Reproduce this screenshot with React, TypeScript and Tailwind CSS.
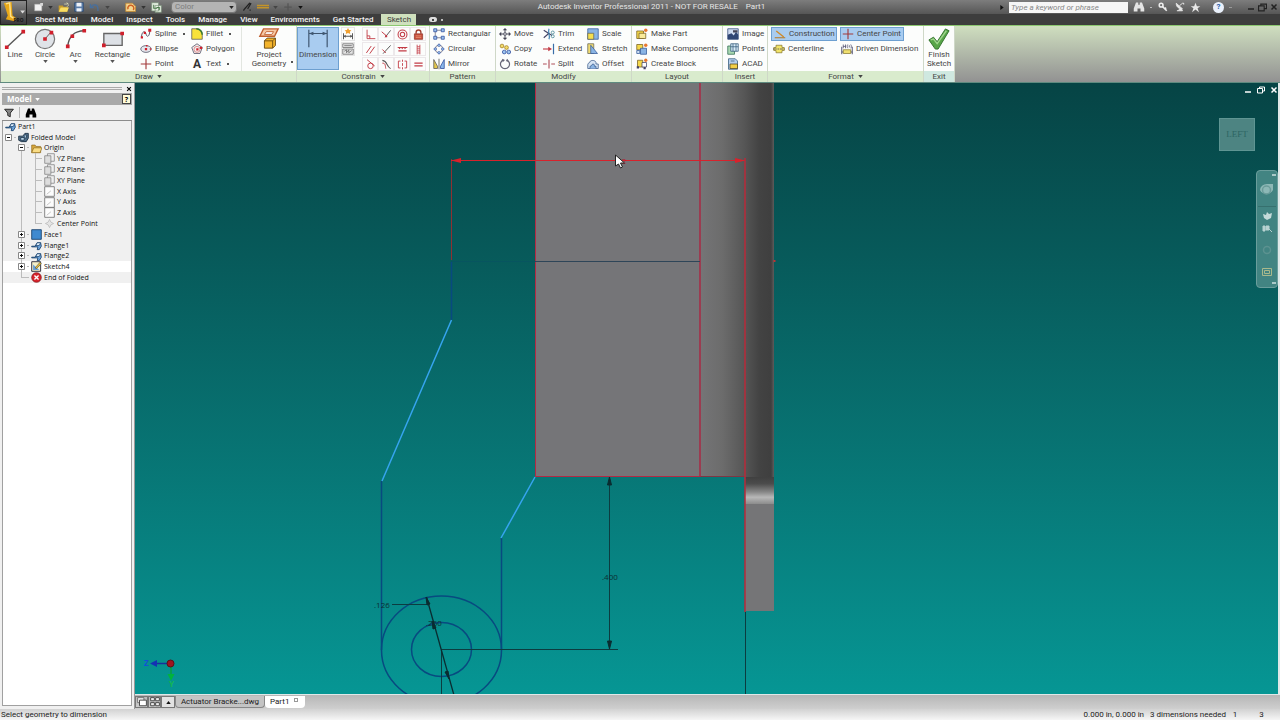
import type { ReactNode } from 'react';
import clsx from 'clsx';

// Drawings for the small ribbon and tree icons, on a 16x16 grid
const ICONS: Record<string, ReactNode> = {
  spline: (
    <>
      <path d="M2 13C2 4 7 3 8 8s5 4 5-5" fill="none" stroke="#556" strokeWidth="1.3" />
      <path d="M1 11h3v3H1zM5 5h3v3H5zM11 1h4v4h-4z" fill="#d0202c" />
    </>
  ),
  ellipse: (
    <>
      <ellipse cx="8" cy="8" rx="7" ry="4.5" fill="#e4e8ee" stroke="#667" strokeWidth="1.2" />
      <path d="M6.500 6.500h3v3h-3zM8 2.500h2v2H8zM13 7h2v2h-2z" fill="#d0202c" />
    </>
  ),
  point: <path d="M8 1v14M1 8h14" stroke="#a23a3a" strokeWidth="1.500" />,
  fillet: (
    <>
      <path d="M1 1h6c5 0 8 4 8 8v6H1z" fill="#f8e23a" stroke="#555" />
      <path d="M7 1c5 0 8 4 8 8" fill="none" stroke="#3a7a30" strokeWidth="2" />
    </>
  ),
  polygon: (
    <>
      <path d="M8 1l7 5-3 8H4L1 6z" fill="#f4eeee" stroke="#667" strokeWidth="1.2" />
      <path d="M7 7h3v3H7zM12 5h3v3h-3z" fill="#d0202c" />
      <circle cx="8" cy="8.500" r="4" fill="none" stroke="#c77" />
    </>
  ),
  autoDim: (
    <>
      <path d="M2 7v8M14 7v8M2 11h12" stroke="#555" fill="none" strokeWidth="1.300" />
      <path d="M2 11l3-2v4zM14 11l-3-2v4z" fill="#555" />
      <path d="M8 0l1.500 2.500 3 .5-2 2 .5 3-3-1.500L5 8l.5-3-2-2 3-.5z" fill="#f0a030" />
    </>
  ),
  showConstraints: (
    <>
      <path d="M1 1h14v5H1zM1 8h14v7H1z" fill="#e5e5e5" stroke="#666" />
      <path d="M3 3.500h10M3 11l3-2v4l3-4v4l4-3" stroke="#666" fill="none" />
    </>
  ),
  coincident: <path d="M3 1v13h12M3 10h4v4" fill="none" stroke="#c23b45" strokeWidth="1.300" />,
  collinear: (
    <>
      <path d="M14 2L6 12" stroke="#555" strokeWidth="1.400" />
      <path d="M1 4l7 6" stroke="#c23b45" strokeWidth="1.400" />
      <path d="M6 9h3v3H6z" fill="#c23b45" />
    </>
  ),
  concentric: (
    <g fill="none" stroke="#c23b45" strokeWidth="1.500">
      <circle cx="8" cy="8" r="6.500" />
      <circle cx="8" cy="8" r="3.200" />
    </g>
  ),
  lock: (
    <>
      <path d="M4.500 7V5a3.500 3.500 0 017 0v2" fill="none" stroke="#a04030" strokeWidth="2" />
      <path d="M2 7h12v8H2z" fill="#c8503c" stroke="#8c3024" />
      <path d="M4 10h8M4 12.500h8" stroke="#f0a080" />
    </>
  ),
  parallel: <path d="M2 13L9 3M7 14l7-10" stroke="#c23b45" strokeWidth="1.400" />,
  perpendicular: (
    <>
      <path d="M3 14L14 2" stroke="#555" strokeWidth="1.400" />
      <path d="M2 8l5 5" stroke="#c23b45" strokeWidth="1.400" />
    </>
  ),
  horizontal: (
    <path d="M1 5h14M2 10h12M3 7l2-2M7 7l2-2M11 7l2-2" stroke="#c23b45" strokeWidth="1.500" />
  ),
  vertical: (
    <path d="M6 1v14M10 1v14M6 4h4M6 7h4M6 10h4M6 13h4" stroke="#c23b45" strokeWidth="1.200" />
  ),
  tangent: (
    <>
      <circle cx="8" cy="10" r="4" fill="none" stroke="#c23b45" strokeWidth="1.400" />
      <path d="M3 1l11 9" stroke="#c23b45" strokeWidth="1.400" />
    </>
  ),
  smooth: (
    <>
      <path d="M2 2c8 1 5 8 12 12" fill="none" stroke="#555" strokeWidth="1.500" />
      <path d="M2 6c5 0 4 4 5 8" fill="none" stroke="#c23b45" strokeWidth="1.400" />
    </>
  ),
  symmetric: (
    <path d="M5 3H2v10h3M11 3h3v10h-3M8 1v3M8 6v4M8 12v3" fill="none" stroke="#c23b45" strokeWidth="1.300" />
  ),
  equal: <path d="M2 6h12M2 10h12" stroke="#c23b45" strokeWidth="1.500" />,
  rectPattern: (
    <>
      <path d="M3 3h10M3 3v10h10" stroke="#667" fill="none" />
      <path d="M1 1h4v4H1zM11 1h4v4h-4zM1 11h4v4H1zM11 11h4v4h-4z" fill="#9cc4f0" stroke="#2c4a9a" />
    </>
  ),
  circPattern: (
    <>
      <circle cx="8" cy="8" r="5" fill="none" stroke="#667" />
      <path d="M8 1l2 2-2 2-2-2zM3 6l2 2-2 2-2-2zM13 6l2 2-2 2-2-2zM8 11l2 2-2 2-2-2z" fill="#9cc4f0" stroke="#2c4a9a" />
    </>
  ),
  mirror: (
    <>
      <path d="M1 2l5 9v3H1z" fill="#e6c84c" stroke="#555" />
      <path d="M15 2l-5 9v3h5z" fill="#8ab8ea" stroke="#2c4a9a" />
      <path d="M8 1v14" stroke="#444" />
    </>
  ),
  move: (
    <>
      <path d="M8 2v12M2 8h12" stroke="#445" strokeWidth="1.300" />
      <path d="M8 0l3 3H5zM8 16l3-3H5zM0 8l3-3v6zM16 8l-3-3v6z" fill="#445" />
      <path d="M6.500 6.500h3v3h-3z" fill="#fff" stroke="#445" />
    </>
  ),
  copy: (
    <>
      <circle cx="4" cy="4" r="2.500" fill="#f3dc6a" stroke="#a07c20" />
      <circle cx="10" cy="6" r="2.500" fill="#f3dc6a" stroke="#a07c20" />
      <circle cx="7" cy="12" r="2.500" fill="#9cc4f0" stroke="#2c4a9a" />
      <circle cx="13" cy="12" r="2.500" fill="#9cc4f0" stroke="#2c4a9a" />
    </>
  ),
  rotate: (
    <>
      <path d="M6 2.500a6 6 0 104 0" fill="none" stroke="#667" strokeWidth="1.600" />
      <path d="M4 1l4 1.500-3 3zM12 1L9 4l3 1z" fill="#667" />
    </>
  ),
  trim: (
    <>
      <path d="M1 3l11 7M1 13l7-6" stroke="#446" strokeWidth="1.500" />
      <path d="M8 1c-2 6 2 8 0 14" fill="none" stroke="#3b7fb0" strokeWidth="1.500" />
      <circle cx="13" cy="6" r="2" fill="none" stroke="#3b7f90" />
      <circle cx="13" cy="11" r="2" fill="none" stroke="#3b7f90" />
    </>
  ),
  extend: (
    <>
      <path d="M0 8h9" stroke="#c23b45" strokeWidth="1.500" />
      <path d="M7 5l5 3-5 3z" fill="#c23b45" />
      <path d="M14 1v14" stroke="#3a6ea8" strokeWidth="1.600" />
    </>
  ),
  split: <path d="M0 8h5M11 8h5M8 2v12" stroke="#b0505a" strokeWidth="1.500" />,
  scale: (
    <>
      <path d="M1 1h14v14H1z" fill="#8ab4e4" stroke="#335a9a" />
      <path d="M1 7h8v8H1z" fill="#f5df50" stroke="#665" />
    </>
  ),
  stretch: (
    <>
      <path d="M1 1h8v13H1z" fill="#f2dc70" stroke="#665" />
      <path d="M5 3l9 11H5z" fill="#8ab4e4" stroke="#335a9a" />
    </>
  ),
  offset: (
    <>
      <path d="M1 14V9c0-3 3-2 3-4s7-3 8 1v2h3v6z" fill="#d6e4f4" stroke="#3a5a8a" />
      <path d="M4 14v-3c3 0 2-3 4-3s2 2 2 3h2v3" fill="#8ab4e4" stroke="#3a5a8a" />
    </>
  ),
  makePart: (
    <>
      <path d="M1 4h9v10H1z" fill="#f5d94a" stroke="#775f20" />
      <path d="M4 7h9v7H4z" fill="#f9ea9a" stroke="#775f20" />
      <circle cx="13" cy="3" r="2.300" fill="#e87830" />
    </>
  ),
  makeComponents: (
    <>
      <path d="M1 2h8v7H1z" fill="#f5d94a" stroke="#775f20" />
      <path d="M6 7h8v8H6z" fill="#8ab4e4" stroke="#335a9a" />
      <path d="M1 10h4v4H1z" fill="#cfe0f5" stroke="#335a9a" />
      <circle cx="13" cy="3" r="2.300" fill="#e87830" />
    </>
  ),
  createBlock: (
    <>
      <path d="M2 3h7v9H2z" fill="#f5d94a" stroke="#775f20" />
      <path d="M8 6h6v6H8z" fill="#fff" stroke="#446" />
      <path d="M1 11h3v3H1zM10 12h3v3h-3z" fill="#446" />
      <circle cx="13" cy="3" r="2.200" fill="#e87830" />
    </>
  ),
  image: (
    <>
      <path d="M1 1h14v14H1z" fill="#cfdcf0" stroke="#334a7a" />
      <path d="M1 15V9l5-2 3 3 3-5 3 4v6z" fill="#2f4674" />
      <path d="M8 3h6v3H8z" fill="#445" />
    </>
  ),
  points: (
    <>
      <path d="M1 4h9v11H1z" fill="#a8d8b0" stroke="#2f6a50" />
      <path d="M5 1h10v10H5z" fill="#d8ecf8" stroke="#335a7a" />
      <path d="M5 5h10M8 1v10M12 1v10" stroke="#335a7a" />
    </>
  ),
  acad: (
    <>
      <path d="M2 1h9l3 3v11H2z" fill="#b4cfee" stroke="#335a7a" />
      <path d="M4 8h10v6H4z" fill="#f1cf48" stroke="#554a20" />
      <path d="M5 4h5" stroke="#335a7a" />
    </>
  ),
  construction: (
    <>
      <path d="M3 4l10 8" stroke="#d08a28" strokeWidth="1.800" />
      <path d="M1 13h14" stroke="#b8761c" strokeWidth="1.300" />
    </>
  ),
  centerline: (
    <>
      <path d="M4 3h8v3h3v4h-3v3H4v-3H1V6h3z" fill="#f2e468" stroke="#887a30" />
      <path d="M0 8h16" stroke="#445" strokeDasharray="5 1 2 1" />
    </>
  ),
  driven: (
    <>
      <path d="M1 5v10M15 5v10M1 12h14" stroke="#446" strokeWidth="1.200" />
      <path d="M3 9h10v5H3z" fill="#f0e070" stroke="#887a30" />
      <path d="M3 2v5M6 2v5M3 4.500h3M9 2c-1 1-1 4 0 5M13 2c1 1 1 4 0 5M11 3v3" stroke="#446" fill="none" />
    </>
  ),
  part: (
    <>
      <path d="M1 9h5l3-5h5l1 5-3 5H9l1-4H1z" fill="#6fa6dc" stroke="#123a66" strokeWidth="1.200" />
      <path d="M9 4h5l-2 4H7z" fill="#dcecfb" stroke="#123a66" />
    </>
  ),
  folded: (
    <>
      <path d="M1 6h6l3-4h5v7l-3 5H5l-4-2z" fill="#52718c" stroke="#10263a" strokeWidth="1.200" />
      <path d="M4 8h5v4H4zM10 4l3 1-2 5" fill="#bcd6ea" stroke="#10263a" />
    </>
  ),
  folder: (
    <>
      <path d="M1 3h5l1 2h7v9H1z" fill="#d9a83c" stroke="#8c6a20" />
      <path d="M4 7h12l-3 7H1z" fill="#f9dc84" stroke="#8c6a20" />
    </>
  ),
  plane: (
    <>
      <path d="M5 1h10v11H5z" fill="#eee" stroke="#777" />
      <path d="M1 4h9v11H1z" fill="#ddd" stroke="#777" />
    </>
  ),
  axis: (
    <>
      <path d="M1 1h14v14H1z" fill="#fcfcfc" stroke="#555" />
      <path d="M4 12l6-5" stroke="#aaa" />
    </>
  ),
  center: <path d="M8 2l2 4 4 2-4 2-2 4-2-4-4-2 4-2z" fill="#e4e4e4" stroke="#b4b4b4" />,
  face: <path d="M1 1h14v14H1z" fill="#3f8ad0" stroke="#123a66" strokeWidth="1.200" />,
  sketch: (
    <>
      <path d="M1 1h13v14H1z" fill="#f4efc8" stroke="#223" strokeWidth="1.300" />
      <path d="M3 13V5l9 8z" fill="#68a0d8" />
      <path d="M6 10l7-8 2 2-7 7z" fill="#f0c030" stroke="#554" />
    </>
  ),
  end: (
    <>
      <circle cx="8" cy="8" r="7" fill="#d8242c" stroke="#7c1418" />
      <path d="M5 5l6 6M11 5l-6 6" stroke="#fff" strokeWidth="2" />
    </>
  ),
  filter: <path d="M1 2h14l-5 6v6l-4-2V8z" fill="#888" stroke="#222" strokeWidth="1.500" />,
  binoculars: (
    <path d="M4 2h3v3h2V2h3l3 8v4h-5v-4H6v4H1v-4z" fill="currentColor" />
  ),
  newFile: (
    <>
      <path d="M1 2h13v12H1z" fill="#f2f2f2" stroke="#999" />
      <path d="M11 0h5v5h-5z" fill="#d8d8d8" />
    </>
  ),
  open: (
    <>
      <path d="M1 5h6l1 2h6v7H1z" fill="#c79c2a" />
      <path d="M4 8h12l-3 6H1z" fill="#f8dc62" />
      <path d="M9 3h5l-1-2 3 3-3 3" fill="none" stroke="#e8e8c0" />
    </>
  ),
  save: (
    <>
      <path d="M1 1h14v14H1z" fill="#5a7ca8" stroke="#24406a" />
      <path d="M4 1h8v6H4zM4 10h8v5H4z" fill="#eef2f8" />
    </>
  ),
  undo: <path d="M2 3v5h5M3 7c4-5 10-3 10 3v3" fill="none" stroke="#4a6f9a" strokeWidth="2" />,
  update: (
    <>
      <path d="M1 3h9l4 4v7H1z" fill="#f3d590" stroke="#c48a30" />
      <path d="M4 11a4 4 0 117 1" fill="none" stroke="#d06020" strokeWidth="2" />
    </>
  ),
  returnIcon: (
    <>
      <path d="M1 1h10v12H1zM6 5h9v10H6z" fill="#e4eee0" stroke="#7a927a" />
      <path d="M4 4v5h5M8 8h4v4" fill="none" stroke="#4a7a4a" strokeWidth="1.500" />
    </>
  ),
  brush: <path d="M3 14c-1-3 2-3 3-5L12 2l2 1-5 8M12 13h2" fill="none" stroke="#222" strokeWidth="2" />,
  lineStyle: <path d="M0 6h16M0 9h16" stroke="#c49428" strokeWidth="2" />,
  plus: <path d="M8 2v12M2 8h12" stroke="#555" strokeWidth="2" />,
  key: (
    <>
      <circle cx="5" cy="5" r="3" fill="none" stroke="#eee" strokeWidth="2.500" />
      <path d="M7 7l7 7M11 11l2-2" stroke="#eee" strokeWidth="2.500" />
    </>
  ),
  satellite: (
    <path d="M2 2c0 6 4 9 10 9zM7 6l5-4M3 14h9l-3-4M12 2h2v2" fill="#e8e8e8" stroke="#e8e8e8" strokeWidth="1.500" />
  ),
  star: <path d="M8 1l2 5h5l-4 3 2 6-5-4-5 4 2-6-4-3h5z" fill="#e8e8e8" />,
  windows: <path d="M1 5h10v9H1zM5 5V2h10v8h-4" fill="none" stroke="currentColor" strokeWidth="2" />,
  close: <path d="M3 3l10 10M13 3L3 13" stroke="currentColor" strokeWidth="3" />,
  minimize: <path d="M2 12h12" stroke="currentColor" strokeWidth="3" />,
  cascade: (
    <>
      <path d="M1 1h10v8H1z" fill="#eee" stroke="#444" />
      <path d="M4 5h11v9H4z" fill="#fff" stroke="#444" strokeWidth="1.500" />
    </>
  ),
  tile: <path d="M1 1h6v5H1zM9 1h6v5H9zM1 9h6v5H1zM9 9h6v5H9z" fill="#eee" stroke="#444" strokeWidth="1.500" />,
};

function Icon({ name, className = 'size-3' }: { name: string; className?: string }) {
  return (
    <svg viewBox="0 0 16 16" className={clsx('shrink-0', className)} aria-hidden="true">
      {ICONS[name]}
    </svg>
  );
}

function Caret({ className = 'text-[#444]' }: { className?: string }) {
  return (
    <svg viewBox="0 0 6 4" className={clsx('h-[3px] w-[5px] shrink-0', className)} aria-hidden="true">
      <path d="M0 0h6L3 4z" fill="currentColor" />
    </svg>
  );
}

interface PanelProps {
  title: string;
  width: string;
  caret?: boolean;
  exit?: boolean;
  children: ReactNode;
}

function Panel({ title, width, caret, exit, children }: PanelProps) {
  return (
    <section className={clsx('flex shrink-0 flex-col border-r border-[#cfd8c8]', width)}>
      <div className="flex flex-1 bg-[#fcfdfc] pt-px">{children}</div>
      <h2
        className={clsx(
          'flex h-[11px] items-center justify-center gap-1 text-[8px] leading-none',
          exit ? 'bg-[#cfe8e0]' : 'bg-[#d9ebcd]'
        )}
      >
        {title}
        {caret && <Caret />}
      </h2>
    </section>
  );
}

interface Item {
  icon: string;
  label: string;
  caret?: boolean;
}

function ToolColumn({ items, width }: { items: Item[]; width: string }) {
  return (
    <div className={clsx('flex shrink-0 flex-col gap-px', width)}>
      {items.map(item => (
        <button key={item.label} className="flex h-[14px] items-center gap-[3px] whitespace-nowrap">
          {item.icon === 'text' ? (
            <span className="w-3 text-center text-[12px] leading-none font-bold text-[#333]">A</span>
          ) : (
            <Icon name={item.icon} />
          )}
          <span>{item.label}</span>
          {item.caret && <span className="ml-[3px] size-[2px] bg-[#555]" />}
        </button>
      ))}
    </div>
  );
}

interface BigToolProps {
  label: ReactNode;
  width: string;
  caret?: boolean;
  active?: boolean;
  children: ReactNode;
}

function BigTool({ label, width, caret, active, children }: BigToolProps) {
  return (
    <button
      className={clsx(
        'flex shrink-0 flex-col items-center border',
        width,
        active ? 'border-[#6d9fd0] bg-[#a9ccf0]' : 'border-transparent'
      )}
    >
      <svg viewBox="0 0 24 24" className="size-[22px] shrink-0" aria-hidden="true">
        {children}
      </svg>
      <span className="text-center leading-[9px]">{label}</span>
      {caret && <Caret className="mt-px text-[#555]" />}
    </button>
  );
}

const CONSTRAINTS = [
  'coincident', 'collinear', 'concentric', 'lock',
  'parallel', 'perpendicular', 'horizontal', 'vertical',
  'tangent', 'smooth', 'symmetric', 'equal',
];

function Ribbon() {
  return (
    <div className="flex h-[57px] shrink-0 border-t border-[#8cc870] bg-linear-to-b from-[#cfdfbf] to-[#929292] pl-px text-[8px] leading-none text-[#454545]">
      <Panel title="Draw" width="w-[296px]" caret>
        <BigTool label="Line" width="w-[28px]">
          <path d="M3 21L21 4" stroke="#555" strokeWidth="1.500" />
          <path d="M1 19h4v4H1zM19 2h4v4h-4z" fill="#d0202c" />
        </BigTool>
        <BigTool label="Circle" width="w-[32px]" caret>
          <circle cx="12" cy="12" r="10.500" fill="#dfe3e8" stroke="#777" strokeWidth="1.300" />
          <path d="M12 12l6-7" stroke="#555" />
          <path d="M10 10h4v4h-4zM17 3h4v4h-4z" fill="#d0202c" />
        </BigTool>
        <BigTool label="Arc" width="w-[29px]" caret>
          <path d="M3 20C4 10 10 3 21 3" fill="none" stroke="#555" strokeWidth="1.500" />
          <path d="M1 18h4v4H1zM6 7h4v4H6zM19 1h4v4h-4z" fill="#d0202c" />
        </BigTool>
        <BigTool label="Rectangle" width="w-[45px]" caret>
          <path d="M2 6h20v13H2z" fill="#dde1e6" stroke="#666" strokeWidth="1.500" />
          <path d="M0 17h4v4H0zM20 4h4v4h-4z" fill="#d0202c" />
        </BigTool>
        <div className="flex flex-1 pl-[5px]">
          <ToolColumn
            width="w-[51px]"
            items={[
              { icon: 'spline', label: 'Spline', caret: true },
              { icon: 'ellipse', label: 'Ellipse' },
              { icon: 'point', label: 'Point' },
            ]}
          />
          <ToolColumn
            width="w-[49px]"
            items={[
              { icon: 'fillet', label: 'Fillet', caret: true },
              { icon: 'polygon', label: 'Polygon' },
              { icon: 'text', label: 'Text', caret: true },
            ]}
          />
        </div>
        <div className="flex w-[55px] items-end border-l border-[#e2e6e0] pl-[3px]">
          <BigTool label={<>Project<br />Geometry</>} width="h-full w-[48px]">
            <path d="M6 1h16l-4 8H2z" fill="#f6c9a4" stroke="#c06030" strokeWidth="1.500" />
            <path d="M9 4h8l-2 3H7z" fill="#fff" stroke="#c06030" />
            <path d="M7 14l3-3h9v8l-3 3H7z" fill="#f4b42c" stroke="#6a4a10" />
            <path d="M7 14h9v8M16 14l3-3" fill="none" stroke="#6a4a10" />
          </BigTool>
          <span className="mb-2 -ml-[2px] size-[2px] bg-[#555]" />
        </div>
      </Panel>

      <Panel title="Constrain" width="w-[133px]" caret>
        <BigTool label="Dimension" width="mb-px w-[42px]" active>
          <path d="M2 2v19M22 2v19M2 6h20" stroke="#3f5670" strokeWidth="1.300" fill="none" />
          <path d="M2 6l5-2v4zM22 6l-5-2v4z" fill="#3f5670" />
        </BigTool>
        <div className="ml-[2px] flex flex-col gap-px">
          {['autoDim', 'showConstraints'].map(name => (
            <button key={name} aria-label={name} className="flex h-[14px] w-[14px] items-center justify-center border border-[#e4e4e4]">
              <Icon name={name} />
            </button>
          ))}
        </div>
        <div className="ml-[7px] grid grid-cols-4 content-start gap-y-px">
          {CONSTRAINTS.map(name => (
            <button key={name} aria-label={name} className="flex h-[14px] w-4 items-center justify-center border border-[#ece8ea]">
              <Icon name={name} className="size-[11px]" />
            </button>
          ))}
        </div>
      </Panel>

      <Panel title="Pattern" width="w-[66px]">
        <ToolColumn
          width="ml-[3px] w-[60px]"
          items={[
            { icon: 'rectPattern', label: 'Rectangular' },
            { icon: 'circPattern', label: 'Circular' },
            { icon: 'mirror', label: 'Mirror' },
          ]}
        />
      </Panel>

      <Panel title="Modify" width="w-[136px]">
        <ToolColumn
          width="ml-[3px] w-[44px]"
          items={[
            { icon: 'move', label: 'Move' },
            { icon: 'copy', label: 'Copy' },
            { icon: 'rotate', label: 'Rotate' },
          ]}
        />
        <ToolColumn
          width="w-[44px]"
          items={[
            { icon: 'trim', label: 'Trim' },
            { icon: 'extend', label: 'Extend' },
            { icon: 'split', label: 'Split' },
          ]}
        />
        <ToolColumn
          width="w-[42px]"
          items={[
            { icon: 'scale', label: 'Scale' },
            { icon: 'stretch', label: 'Stretch' },
            { icon: 'offset', label: 'Offset' },
          ]}
        />
      </Panel>

      <Panel title="Layout" width="w-[91px]">
        <ToolColumn
          width="ml-[4px] w-[84px]"
          items={[
            { icon: 'makePart', label: 'Make Part' },
            { icon: 'makeComponents', label: 'Make Components' },
            { icon: 'createBlock', label: 'Create Block' },
          ]}
        />
      </Panel>

      <Panel title="Insert" width="w-[45px]">
        <ToolColumn
          width="ml-[4px] w-[40px]"
          items={[
            { icon: 'image', label: 'Image' },
            { icon: 'points', label: 'Points' },
            { icon: 'acad', label: 'ACAD' },
          ]}
        />
      </Panel>

      <Panel title="Format" width="w-[156px]" caret>
        <div className="grid grid-cols-[69px_83px] content-start gap-y-px pl-[3px] whitespace-nowrap">
          <button className="flex h-[14px] w-[66px] items-center gap-[3px] border border-[#6d9fd0] bg-[#a9ccf0] pl-[2px]">
            <Icon name="construction" />
            Construction
          </button>
          <button className="flex h-[14px] w-[64px] items-center gap-[3px] border border-[#6d9fd0] bg-[#a9ccf0] pl-px">
            <Icon name="point" />
            Center Point
          </button>
          <button className="flex h-[14px] items-center gap-[3px] pl-[2px]">
            <Icon name="centerline" />
            Centerline
          </button>
          <button className="flex h-[14px] items-center gap-[3px] pl-px">
            <Icon name="driven" />
            Driven Dimension
          </button>
        </div>
      </Panel>

      <Panel title="Exit" width="w-[31px]" exit>
        <BigTool label={<>Finish<br />Sketch</>} width="w-[30px]">
          <path d="M1 13l5-3 4 5L19 1l4 2-12 20H8z" fill="#57a548" stroke="#2f6f2a" />
          <path d="M3 13l3-1 4 5L20 3" fill="none" stroke="#9fd58c" strokeWidth="1.500" />
        </BigTool>
      </Panel>
    </div>
  );
}

const TABS = ['Sheet Metal', 'Model', 'Inspect', 'Tools', 'Manage', 'View', 'Environments', 'Get Started'];

function TitleBar() {
  return (
    <header className="flex h-[25px] shrink-0">
      <button aria-label="Application menu" className="flex w-[27px] shrink-0 items-end border border-[#222] bg-linear-to-b from-[#8a8a8a] to-[#3a3a3a]">
        <svg viewBox="0 0 26 24" className="h-[23px] w-[25px]" aria-hidden="true">
          <path d="M3 2l8-1 1 14 4 3-2 3-9-2 2-4z" fill="#e8a818" />
          <path d="M5 3l4-1 1 14 3 2" fill="none" stroke="#ffe28a" strokeWidth="1.500" />
          <path d="M20 10h5l-2.500 3z" fill="#ddd" />
          <text x="13" y="22" fontSize="5" fontWeight="700" fill="#151515" fontFamily="Open Sans">PRO</text>
        </svg>
      </button>
      <div className="flex min-w-0 flex-1 flex-col">
        <div className="grid h-[14px] grid-cols-[1fr_auto_1fr] items-center bg-linear-to-b from-[#7d7d7d] to-[#565656]">
          <div className="flex items-center gap-[5px] pl-[6px]">
            <Icon name="newFile" className="h-[9px] w-[11px]" />
            <Caret className="-ml-px text-[#333]" />
            <Icon name="open" className="size-[11px]" />
            <Icon name="save" className="size-[10px]" />
            <Icon name="undo" className="size-[11px]" />
            <Caret className="text-[#444]" />
            <Icon name="update" className="ml-[10px] size-3" />
            <Caret className="-ml-px text-[#333]" />
            <Icon name="returnIcon" className="size-[11px]" />
            <div className="ml-[4px] flex h-3 w-[66px] items-center rounded-sm border border-[#777] bg-[#b4b4b4] pr-[2px]">
              <select aria-label="Color" className="h-[10px] min-w-0 flex-1 appearance-none pl-[3px] text-[8px] leading-[10px] text-[#7c7c7c]">
                <option>Color</option>
              </select>
              <Caret className="text-[#222]" />
            </div>
            <Icon name="brush" className="size-[10px]" />
            <Icon name="lineStyle" className="size-[12px]" />
            <Caret className="-ml-px text-[#444]" />
            <Icon name="plus" className="size-[10px]" />
            <Caret className="text-[#111]" />
          </div>
          <h1 className="-ml-1 text-[8px] leading-none whitespace-pre text-[#e6e6e6]">
            Autodesk Inventor Professional 2011 - NOT FOR RESALE{'    '}Part1
          </h1>
          <div className="flex items-center justify-end gap-[5px] pr-[2px] text-[#e4e4e4]">
            <svg viewBox="0 0 4 6" className="h-[5px] w-[4px]" aria-hidden="true">
              <path d="M0 0l4 3-4 3z" fill="#111" />
            </svg>
            <input
              aria-label="Search"
              placeholder="Type a keyword or phrase"
              className="h-[11px] w-[119px] bg-[#f6f6f6] px-[2px] text-[8px] leading-none italic placeholder:text-[#888]"
            />
            <Icon name="binoculars" />
            <span className="h-px w-[2px] bg-[#bbb]" />
            <Icon name="key" className="ml-px size-[10px]" />
            <Icon name="satellite" className="ml-[2px] size-[10px]" />
            <Icon name="star" className="size-[11px]" />
            <span className="ml-[7px] flex size-[11px] items-center justify-center rounded-full bg-[#e9f0fb] text-[8px] leading-none font-bold text-[#2a5aa8]">
              ?
            </span>
            <span className="mr-[10px] h-px w-[3px] bg-[#999]" />
            <div className="flex items-center gap-[3px] text-[#222]">
              <button aria-label="Minimize"><Icon name="minimize" className="block size-[8px]" /></button>
              <button aria-label="Restore"><Icon name="windows" className="block size-[9px]" /></button>
              <button aria-label="Close"><Icon name="close" className="block size-[8px]" /></button>
            </div>
          </div>
        </div>
        <nav className="flex h-[11px] items-center gap-[13px] bg-[#3d3d3d] pl-2 text-[8px] leading-none font-medium text-[#f2f2f2]">
          {TABS.map(tab => (
            <button key={tab}>{tab}</button>
          ))}
          <button className="-ml-[5px] h-full w-[35px] bg-[#cfe0bd] text-center font-normal text-[#3a3a3a]">Sketch</button>
          <span className="flex h-[5px] w-2 items-center justify-center rounded-sm bg-[#ddd]">
            <span className="size-[2px] bg-[#444]" />
          </span>
          <span className="-ml-[9px] size-[2px] bg-[#bbb]" />
        </nav>
      </div>
    </header>
  );
}

interface TreeNode {
  icon: string;
  label: string;
  level: number;
  toggle?: '+' | '-';
  active?: boolean;
}

const TREE: TreeNode[] = [
  { icon: 'part', label: 'Part1', level: 0 },
  { icon: 'folded', label: 'Folded Model', level: 1, toggle: '-' },
  { icon: 'folder', label: 'Origin', level: 2, toggle: '-' },
  { icon: 'plane', label: 'YZ Plane', level: 3 },
  { icon: 'plane', label: 'XZ Plane', level: 3 },
  { icon: 'plane', label: 'XY Plane', level: 3 },
  { icon: 'axis', label: 'X Axis', level: 3 },
  { icon: 'axis', label: 'Y Axis', level: 3 },
  { icon: 'axis', label: 'Z Axis', level: 3 },
  { icon: 'center', label: 'Center Point', level: 3 },
  { icon: 'face', label: 'Face1', level: 2, toggle: '+' },
  { icon: 'part', label: 'Flange1', level: 2, toggle: '+' },
  { icon: 'part', label: 'Flange2', level: 2, toggle: '+' },
  { icon: 'sketch', label: 'Sketch4', level: 2, toggle: '+', active: true },
  { icon: 'end', label: 'End of Folded', level: 2 },
];

const INDENT = ['pl-[2px]', 'pl-[2px]', 'pl-[15px]', 'pl-[29px]'];

function ModelBrowser() {
  return (
    <aside className="flex w-[135px] shrink-0 flex-col border-r border-[#9a9a9a] bg-[#f0f0f0] px-[2px] pb-[3px]">
      <div className="flex h-[10px] items-center gap-1 pt-px">
        <span className="h-[3px] flex-1 border-y border-[#aaa]" />
        <button aria-label="Close browser" className="text-black"><Icon name="close" className="size-[6px]" /></button>
      </div>
      <div className="flex h-3 items-center gap-[3px] bg-[#a9a9a9] pl-[5px] font-['Open_Sans',sans-serif] text-[8px] leading-none font-bold text-white">
        Model
        <Caret className="text-white" />
        <button aria-label="Help" className="mr-px ml-auto flex h-[10px] w-[9px] items-center justify-center border border-[#444] bg-[#fffbd8] text-[7px] leading-none text-black">
          ?
        </button>
      </div>
      <div className="flex h-4 items-center gap-[5px] border-b border-[#8c8c8c] pl-[2px] text-black">
        <button aria-label="Filter"><Icon name="filter" className="block size-[10px]" /></button>
        <span className="h-[11px] w-px bg-[#b5b5b5]" />
        <button aria-label="Find"><Icon name="binoculars" className="block size-[12px]" /></button>
      </div>
      <div className="flex-1 border-x border-b border-[#a0a0a0] bg-white">
        <ul className="relative grid h-[162px] auto-rows-fr bg-[#f0f0f0] font-['Open_Sans',sans-serif] text-[7px] leading-none text-[#111]">
          <li className="absolute top-[30px] left-[18px] h-[127px] w-px bg-[#bcbcbc]" aria-hidden="true" />
          <li className="absolute top-[32px] left-[32px] h-[71px] w-px bg-[#bcbcbc]" aria-hidden="true" />
          {TREE.map(node => (
            <li
              key={node.label}
              className={clsx('flex min-h-0 items-center gap-[2px]', INDENT[node.level], node.active && 'bg-white')}
            >
              {node.toggle && (
                <svg viewBox="0 0 7 7" className="relative size-[7px] shrink-0" aria-hidden="true">
                  <path d="M.5.5h6v6h-6z" fill="#fff" stroke="#888" />
                  <path d={node.toggle === '+' ? 'M2 3.500h3M3.500 2v3' : 'M2 3.500h3'} stroke="#111" />
                </svg>
              )}
              {node.toggle && <span className="h-px w-[2px] bg-[#bcbcbc]" />}
              {!node.toggle && node.level > 0 && (
                <span className={clsx('ml-1 h-px bg-[#bcbcbc]', node.level === 2 ? 'w-[7px]' : 'w-[6px]')} />
              )}
              <Icon name={node.icon} className="size-[11px]" />
              <span className="whitespace-nowrap">{node.label}</span>
            </li>
          ))}
        </ul>
      </div>
    </aside>
  );
}

// Part geometry and sketch entities, in canvas pixels
function Drawing() {
  return (
    <svg className="absolute inset-0 size-full" aria-label="Part view">
      <defs>
        <linearGradient id="bend">
          <stop offset="0" stopColor="#757577" />
          <stop offset="0.300" stopColor="#6c6c6c" />
          <stop offset="0.600" stopColor="#565656" />
          <stop offset="0.800" stopColor="#434343" />
          <stop offset="0.960" stopColor="#3f3f3f" />
          <stop offset="1" stopColor="#5c5c5c" />
        </linearGradient>
        <linearGradient id="flange" x2="0" y2="1">
          <stop offset="0" stopColor="#404040" />
          <stop offset="0.250" stopColor="#4c4c4c" />
          <stop offset="0.550" stopColor="#868686" />
          <stop offset="0.750" stopColor="#b8b8b8" />
          <stop offset="1" stopColor="#8c8c8c" />
        </linearGradient>
      </defs>
      <path d="M400 0h165v394H400z" fill="#757578" />
      <path d="M565 0h74v394h-74z" fill="url(#bend)" />
      <path d="M610 394h29v27h-29z" fill="url(#flange)" />
      <path d="M610 421h29v107h-29z" fill="#757577" />

      <g fill="none" stroke="#b32a44">
        <path d="M400.500 0v393.500H565" />
        <path d="M565 393.500h45" stroke="#803644" />
        <path d="M565 0v394" stroke="#a82a44" strokeWidth="1.500" />
        <path d="M316.500 76v101" stroke="#8f3032" />
        <path d="M316 77.500h294" stroke="#d8222c" />
        <path d="M610 75v454" stroke="#b82a3a" strokeWidth="1.500" />
        <path d="M638.500 178h2" stroke="#b33" strokeWidth="2" />
      </g>
      <path d="M316 77.500l10-2.500v5zM610 77.500l-10-2.500v5z" fill="#d8222c" />

      <path d="M400 178.500h165" stroke="#2e4558" />
      <path d="M316 178.500h84" stroke="#07555f" />
      <g fill="none" stroke="#084a80" strokeWidth="1.500">
        <path d="M316.500 179v58M246.500 398v169M366.500 455v112" />
        <ellipse cx="306.500" cy="567" rx="60" ry="54" />
        <ellipse cx="306.500" cy="566.500" rx="30" ry="27" />
      </g>
      <path d="M316.500 237L247 398M400 394l-34 61" stroke="#36a4ee" strokeWidth="1.500" />

      <g stroke="#0c3c40" fill="none">
        <path d="M306 566.500h177M306.500 567v60M474.500 394v172M257 521.500h35" />
        <path d="M610.500 529v100" />
        <path d="M291.500 514l28 100" stroke="#0a2c30" strokeWidth="1.300" />
      </g>
      <path
        d="M474.500 394l-2 8h4zM474.500 566l-2-8h4zM291 514l4 7-3 1zM297 538l4 7-3 1zM314 596l-4-7 3-1z"
        fill="#0a2c30"
        stroke="#0a2c30"
      />
      <g fontFamily="Open Sans, sans-serif" fontSize="8" fill="#0c2f33">
        <text x="239" y="525">.126</text>
        <text x="291" y="543">.250</text>
        <text x="467" y="497">.400</text>
        <text x="480" y="81" fill="#b02030">.42</text>
      </g>
      <path d="M480.500 72v11l3-2 2 4 2-1-2-4h4z" fill="#fff" stroke="#222" />

      <path d="M34 580.500H20" stroke="#1a2f9c" strokeWidth="1.500" />
      <path d="M15 580.500l7-3.500v7z" fill="#1432b4" />
      <path d="M36 584v8" stroke="#0aa03c" strokeWidth="1.500" />
      <path d="M36 598l-3.500-7h7z" fill="#00b43c" />
      <circle cx="35.500" cy="580.500" r="3.500" fill="#a01420" stroke="#5c1018" />
      <g fontFamily="Open Sans, sans-serif" fontSize="8" fontWeight="700">
        <text x="9" y="583" fill="#1450d8">Z</text>
        <text x="34" y="604" fill="#14b850">Y</text>
      </g>
    </svg>
  );
}

function Canvas() {
  return (
    <main className="relative min-h-0 flex-1 overflow-hidden border-r-2 border-b border-[#dfe8e8] bg-linear-to-b from-[#064445] to-[#069694]">
      <Drawing />
      <div className="absolute top-[3px] right-0 flex gap-[5px] text-white">
        <button aria-label="Minimize view"><Icon name="minimize" className="size-[8px]" /></button>
        <button aria-label="Restore view"><Icon name="windows" className="size-[8px]" /></button>
        <button aria-label="Close view"><Icon name="close" className="size-[8px]" /></button>
      </div>
      <button className="absolute top-[35px] right-[23px] h-[33px] w-9 border border-[#5f9593] bg-[#4d8482] font-['Liberation_Serif',serif] text-[9px] leading-none text-[#2c6463]">
        LEFT
      </button>
      <div className="absolute top-[87px] right-0 flex h-[118px] w-[22px] flex-col items-center rounded-sm border border-[#6a9e9c] bg-[#428482]">
        <svg viewBox="0 0 20 116" className="size-full" aria-hidden="true">
          <path d="M15 4h4M15 112h4" stroke="#a9c9c8" strokeWidth="2" />
          <path d="M3 19a7 6 0 017-6h6v6a7 6 0 01-13 0z" fill="#8db8b6" />
          <circle cx="9.500" cy="19" r="4" fill="none" stroke="#6b9c9a" strokeWidth="1.500" />
          <path d="M1 35.500h18M1 53" stroke="#36706e" />
          <path d="M6 43l3 1 1-3 2 2 3-1-1 5-4 2-3-2z" fill="#c4dad9" />
          <path d="M6 55h2v5H6zM9 55h3v4H9zM12 58l3 3" fill="#b7d2d1" stroke="#b7d2d1" />
          <circle cx="10" cy="79" r="3.500" fill="none" stroke="#5c9290" strokeWidth="1.500" />
          <path d="M5.500 97.500h9v7h-9zM7.500 99.500h5v3h-5z" fill="none" stroke="#a9b98c" />
        </svg>
      </div>
    </main>
  );
}

function DocumentTabs() {
  return (
    <div className="flex h-[14px] shrink-0 items-center bg-linear-to-b from-[#b6b6b6] to-[#cfcfcf] text-[8px] leading-none text-[#222]">
      <button aria-label="Cascade" className="flex h-3 w-[13px] items-center justify-center border border-[#777]"><Icon name="cascade" className="size-[10px]" /></button>
      <button aria-label="Tile" className="flex h-3 w-[13px] items-center justify-center border border-[#777]"><Icon name="tile" className="size-[10px]" /></button>
      <button aria-label="More documents" className="flex h-3 w-[14px] items-center justify-center border border-[#777] bg-[#e2e2e2]">
        <Caret className="rotate-180 text-[#111]" />
      </button>
      <button className="h-3 w-[90px] rounded-b-sm border border-t-0 border-[#888] bg-[#c4c4c4]">Actuator Bracke...dwg</button>
      <button className="flex h-3 w-[40px] items-center gap-[5px] rounded-b-sm bg-white pl-[5px]">
        Part1
        <span className="mb-1 size-[4px] border border-[#999]" />
      </button>
    </div>
  );
}

export default function App() {
  return (
    <div className="flex h-screen flex-col overflow-hidden bg-[#f0f0f0] font-[Roboto,sans-serif]">
      <TitleBar />
      <Ribbon />
      <div className="flex min-h-0 flex-1 border-t border-[#5f8a80]">
        <ModelBrowser />
        <div className="flex min-w-0 flex-1 flex-col">
          <Canvas />
          <DocumentTabs />
        </div>
      </div>
      <footer className="flex h-[11px] shrink-0 items-center bg-linear-to-b from-[#d2d2d2] to-[#f6f6f6] px-px text-[8px] leading-none text-[#222]">
        <span>Select geometry to dimension</span>
        <span className="ml-auto">0.000 in, 0.000 in</span>
        <span className="ml-[6px]">3 dimensions needed</span>
        <span className="w-[18px] text-center">1</span>
        <span className="w-[35px] text-center">3</span>
      </footer>
    </div>
  );
}
